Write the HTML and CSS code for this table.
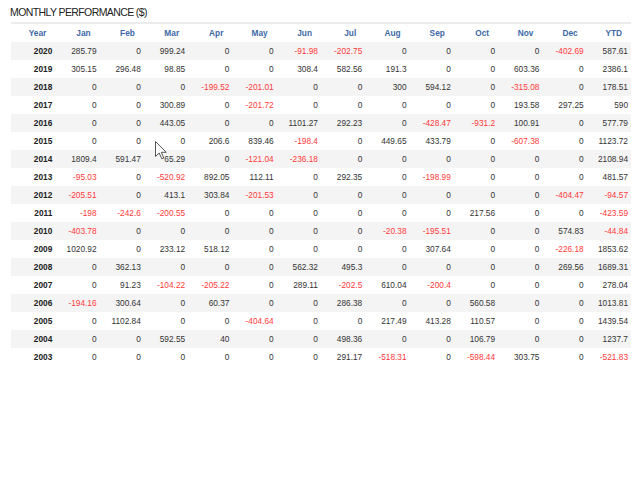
FILE: index.html
```html
<!DOCTYPE html>
<html>
<head>
<meta charset="utf-8">
<link rel="stylesheet" href="styles.css">
</head>
<body>
<div class="page">
  <div class="title">MONTHLY PERFORMANCE ($)</div>
  <table class="perf">
    <thead>
      <tr><th>Year</th><th>Jan</th><th>Feb</th><th>Mar</th><th>Apr</th><th>May</th><th>Jun</th><th>Jul</th><th>Aug</th><th>Sep</th><th>Oct</th><th>Nov</th><th>Dec</th><th>YTD</th></tr>
    </thead>
    <tbody>
      <tr><td class="yr">2020</td><td>285.79</td><td>0</td><td>999.24</td><td>0</td><td>0</td><td class="neg">-91.98</td><td class="neg">-202.75</td><td>0</td><td>0</td><td>0</td><td>0</td><td class="neg">-402.69</td><td>587.61</td></tr>
      <tr><td class="yr">2019</td><td>305.15</td><td>296.48</td><td>98.85</td><td>0</td><td>0</td><td>308.4</td><td>582.56</td><td>191.3</td><td>0</td><td>0</td><td>603.36</td><td>0</td><td>2386.1</td></tr>
      <tr><td class="yr">2018</td><td>0</td><td>0</td><td>0</td><td class="neg">-199.52</td><td class="neg">-201.01</td><td>0</td><td>0</td><td>300</td><td>594.12</td><td>0</td><td class="neg">-315.08</td><td>0</td><td>178.51</td></tr>
      <tr><td class="yr">2017</td><td>0</td><td>0</td><td>300.89</td><td>0</td><td class="neg">-201.72</td><td>0</td><td>0</td><td>0</td><td>0</td><td>0</td><td>193.58</td><td>297.25</td><td>590</td></tr>
      <tr><td class="yr">2016</td><td>0</td><td>0</td><td>443.05</td><td>0</td><td>0</td><td>1101.27</td><td>292.23</td><td>0</td><td class="neg">-428.47</td><td class="neg">-931.2</td><td>100.91</td><td>0</td><td>577.79</td></tr>
      <tr><td class="yr">2015</td><td>0</td><td>0</td><td>0</td><td>206.6</td><td>839.46</td><td class="neg">-198.4</td><td>0</td><td>449.65</td><td>433.79</td><td>0</td><td class="neg">-607.38</td><td>0</td><td>1123.72</td></tr>
      <tr><td class="yr">2014</td><td>1809.4</td><td>591.47</td><td>65.29</td><td>0</td><td class="neg">-121.04</td><td class="neg">-236.18</td><td>0</td><td>0</td><td>0</td><td>0</td><td>0</td><td>0</td><td>2108.94</td></tr>
      <tr><td class="yr">2013</td><td class="neg">-95.03</td><td>0</td><td class="neg">-520.92</td><td>892.05</td><td>112.11</td><td>0</td><td>292.35</td><td>0</td><td class="neg">-198.99</td><td>0</td><td>0</td><td>0</td><td>481.57</td></tr>
      <tr><td class="yr">2012</td><td class="neg">-205.51</td><td>0</td><td>413.1</td><td>303.84</td><td class="neg">-201.53</td><td>0</td><td>0</td><td>0</td><td>0</td><td>0</td><td>0</td><td class="neg">-404.47</td><td class="neg">-94.57</td></tr>
      <tr><td class="yr">2011</td><td class="neg">-198</td><td class="neg">-242.6</td><td class="neg">-200.55</td><td>0</td><td>0</td><td>0</td><td>0</td><td>0</td><td>0</td><td>217.56</td><td>0</td><td>0</td><td class="neg">-423.59</td></tr>
      <tr><td class="yr">2010</td><td class="neg">-403.78</td><td>0</td><td>0</td><td>0</td><td>0</td><td>0</td><td>0</td><td class="neg">-20.38</td><td class="neg">-195.51</td><td>0</td><td>0</td><td>574.83</td><td class="neg">-44.84</td></tr>
      <tr><td class="yr">2009</td><td>1020.92</td><td>0</td><td>233.12</td><td>518.12</td><td>0</td><td>0</td><td>0</td><td>0</td><td>307.64</td><td>0</td><td>0</td><td class="neg">-226.18</td><td>1853.62</td></tr>
      <tr><td class="yr">2008</td><td>0</td><td>362.13</td><td>0</td><td>0</td><td>0</td><td>562.32</td><td>495.3</td><td>0</td><td>0</td><td>0</td><td>0</td><td>269.56</td><td>1689.31</td></tr>
      <tr><td class="yr">2007</td><td>0</td><td>91.23</td><td class="neg">-104.22</td><td class="neg">-205.22</td><td>0</td><td>289.11</td><td class="neg">-202.5</td><td>610.04</td><td class="neg">-200.4</td><td>0</td><td>0</td><td>0</td><td>278.04</td></tr>
      <tr><td class="yr">2006</td><td class="neg">-194.16</td><td>300.64</td><td>0</td><td>60.37</td><td>0</td><td>0</td><td>286.38</td><td>0</td><td>0</td><td>560.58</td><td>0</td><td>0</td><td>1013.81</td></tr>
      <tr><td class="yr">2005</td><td>0</td><td>1102.84</td><td>0</td><td>0</td><td class="neg">-404.64</td><td>0</td><td>0</td><td>217.49</td><td>413.28</td><td>110.57</td><td>0</td><td>0</td><td>1439.54</td></tr>
      <tr><td class="yr">2004</td><td>0</td><td>0</td><td>592.55</td><td>40</td><td>0</td><td>0</td><td>498.36</td><td>0</td><td>0</td><td>106.79</td><td>0</td><td>0</td><td>1237.7</td></tr>
      <tr><td class="yr">2003</td><td>0</td><td>0</td><td>0</td><td>0</td><td>0</td><td>0</td><td>291.17</td><td class="neg">-518.31</td><td>0</td><td class="neg">-598.44</td><td>303.75</td><td>0</td><td class="neg">-521.83</td></tr>
    </tbody>
  </table>
</div>
<svg class="cursor" width="12" height="19" viewBox="0 0 12 19"><path d="M0.5 0.5 L0.5 15.5 L4.2 12 L6.8 17.8 L8.8 17 L6.3 11.3 L11.2 11.3 Z" fill="#fff" stroke="#555" stroke-width="1"/></svg>
</body>
</html>
```
FILE: styles.css
```css
html, body {
  margin: 0;
  padding: 0;
  background: #fff;
}
.page {
  padding: 7px 9px 0 11px;
  font-family: "Liberation Sans", Arial, sans-serif;
}
.title {
  font-size: 10.5px;
  line-height: 11px;
  height: 11px;
  margin: 0 0 4px -1px;
  color: #222;
  letter-spacing: -0.6px;
}
.perf {
  width: 620px;
  table-layout: fixed;
  border-collapse: collapse;
  border-top: 2px solid #ececec;
  font-size: 8.3px;
}
.perf th {
  height: 18px;
  padding: 0 9px 0 0;
  text-align: right;
  font-weight: bold;
  color: #3c68a8;
}
.perf td {
  height: 18px;
  padding: 0 3px 0 0;
  text-align: right;
  color: #333;
}
.perf tbody tr:nth-child(odd) td {
  background: #f4f4f4;
}
.perf td.yr {
  font-weight: bold;
  color: #222;
}
.perf td.neg {
  color: #ff3a3a;
}
.cursor {
  position: absolute;
  left: 155px;
  top: 141px;
}
```
